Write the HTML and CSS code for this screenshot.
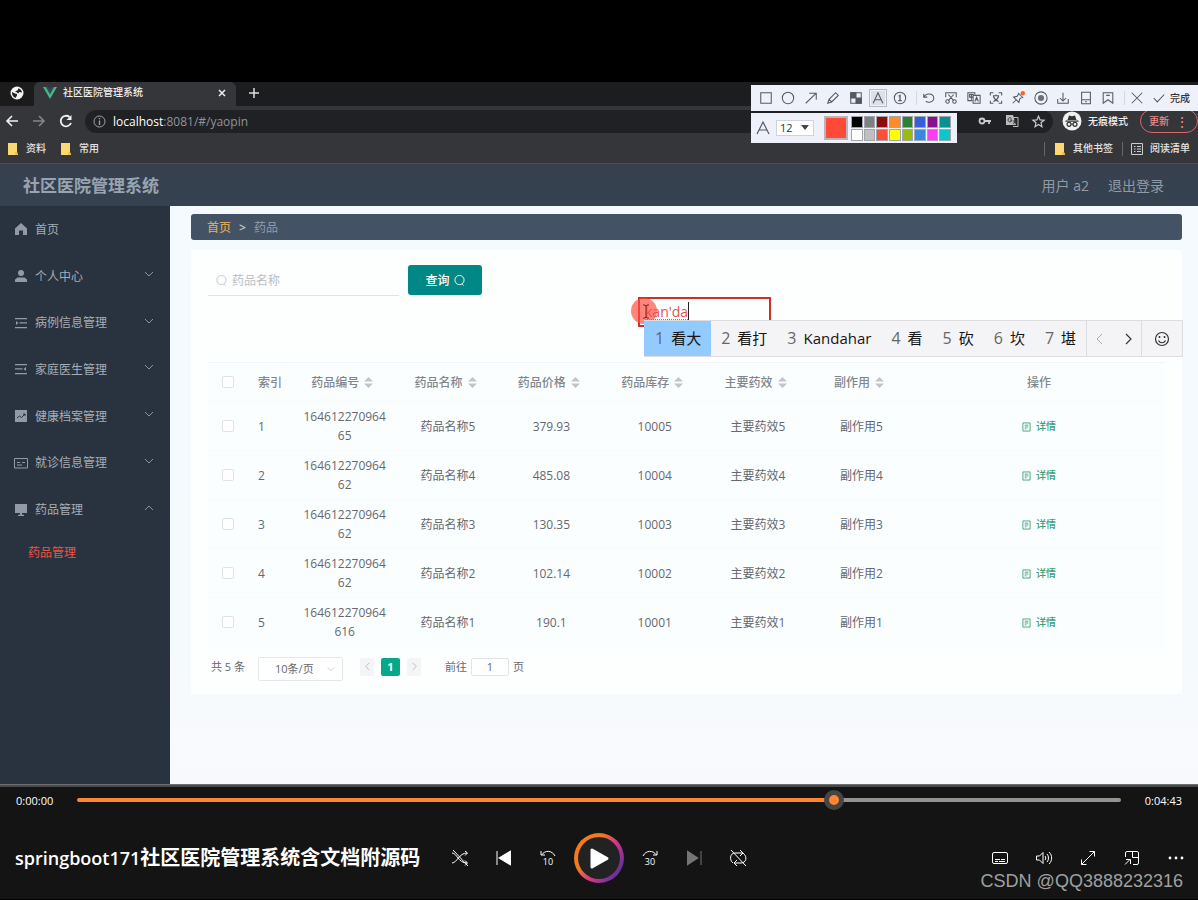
FILE: index.html
```html
<!DOCTYPE html>
<html lang="zh-CN">
<head>
<meta charset="utf-8">
<title>springboot171社区医院管理系统含文档附源码</title>
<link rel="stylesheet" href="styles.css">
</head>
<body>
<svg class="defs" aria-hidden="true">
  <symbol id="down" viewBox="0 0 10 10"><path d="M1 3l4 4 4-4" fill="none" stroke="currentColor"/></symbol>
  <symbol id="sort" viewBox="0 0 10 12"><path d="M5 0l5 5H0zM5 12l5-5H0z" fill="currentColor"/></symbol>
  <symbol id="find" viewBox="0 0 12 12"><circle cx="6" cy="5.500" r="5" fill="none" stroke="currentColor"/><path d="M8.500 9.500l2 2" fill="none" stroke="currentColor"/></symbol>
  <symbol id="doc" viewBox="0 0 10 10"><path d="M1 .5h8v9H1zM3 3h4M3 5h4M3 7h2" fill="none" stroke="currentColor"/></symbol>
  <symbol id="folder" viewBox="0 0 12 12"><path d="M1 0h9v9l1 3H1z" fill="#fcd871"/><path d="M8 9h2l1 3H8z" fill="#f2c04e"/></symbol>
</svg>

<main class="video">
  <div class="tabs">
    <span class="tab-pin"><svg width="14" height="14" viewBox="0 0 14 14"><circle cx="7" cy="7" r="6.500" fill="#f3f3f3"/><path d="M8 2.500c2 0 4 2 4 4L9.500 6 8 7.500 6.500 6 5 5.500 8 4zM2 6l3 1.500 2 .5v1.500L5.500 12C3 11 1.800 9 2 6z" fill="#222"/></svg></span>
    <div class="tab">
      <svg width="14" height="12" viewBox="0 0 14 12"><path d="M0 0h3l4 7 4-7h3L7 12z" fill="#41b883"/><path d="M3 0h2.500L7 3l1.500-3H11L7 7z" fill="#35495e"/></svg>
      <span class="tab-title">社区医院管理系统</span>
      <button class="plain" aria-label="关闭"><svg width="8" height="8" viewBox="0 0 8 8"><path d="M1 1l6 6M7 1L1 7" stroke="#eee" stroke-width="1.500"/></svg></button>
    </div>
    <button class="plain new-tab" aria-label="新标签页"><svg width="12" height="12" viewBox="0 0 12 12"><path d="M6 1v10M1 6h10" stroke="#ddd" stroke-width="1.500"/></svg></button>
  </div>
  <div class="toolbar">
    <div class="nav">
      <button class="plain" aria-label="后退"><svg width="14" height="14" viewBox="0 0 14 14" fill="none" stroke="#f1f1f1" stroke-width="1.600"><path d="M13 7H2M7 2L2 7l5 5"/></svg></button>
      <button class="plain" aria-label="前进"><svg width="14" height="14" viewBox="0 0 14 14" fill="none" stroke="#85868a" stroke-width="1.500"><path d="M1 7h11M7 2l5 5-5 5"/></svg></button>
      <button class="plain" aria-label="刷新"><svg width="14" height="14" viewBox="0 0 14 14" fill="none" stroke="#f1f1f1" stroke-width="1.800"><path d="M12 9a5.300 5.300 0 1 1-1.500-6"/><path d="M12.500 1v5h-5z" fill="#f1f1f1" stroke="none"/></svg></button>
    </div>
    <div class="omnibox">
      <svg width="13" height="13" viewBox="0 0 13 13" fill="none" stroke="#a5a6a9"><circle cx="6.500" cy="6.500" r="5.500"/><path d="M6.500 5.500V10M6.500 3v1.300" stroke-width="1.300"/></svg>
      <span class="url"><b>localhost</b>:8081/#/yaopin</span>
      <svg width="14" height="12" viewBox="0 0 14 12" fill="none" stroke="#ccc" stroke-width="1.800"><circle cx="4" cy="6" r="2.500"/><path d="M6.500 6H13M11 6v3"/></svg>
      <svg width="14" height="14" viewBox="0 0 14 14"><path d="M1 1h7l3 10H1z" fill="#bbb"/><path d="M6 3.500h7v9H8" fill="none" stroke="#bbb"/><path d="M6.500 4.500A2 2 0 1 0 7 6H5M8 7h4M10 6v1l-1.500 3M9 8l3 2" fill="none" stroke="#333" stroke-width=".9"/></svg>
      <svg width="13" height="13" viewBox="0 0 14 14"><path d="M7 1.300l1.700 4 4.300.3-3.300 2.800 1 4.200L7 10.300l-3.700 2.300 1-4.200L1 5.600l4.300-.3z" fill="none" stroke="#ccc" stroke-width="1.300"/></svg>
    </div>
    <span class="incognito"><svg width="20" height="20" viewBox="0 0 20 20"><circle cx="10" cy="10" r="9.500" fill="#f0f0f0"/><path d="M3.500 9.500h13v1.200h-13zM5.500 9L7 4.500l3 .8 3-.8L14.500 9z" fill="#333"/><g fill="none" stroke="#333" stroke-width="1.200"><circle cx="7" cy="13.300" r="2"/><circle cx="13" cy="13.300" r="2"/><path d="M9 13h2"/></g></svg>无痕模式</span>
    <button class="update">更新<span>⋮</span></button>
  </div>
  <div class="bookmarks">
    <a href="#"><svg width="12" height="12"><use href="#folder"/></svg>资料</a>
    <a href="#"><svg width="12" height="12"><use href="#folder"/></svg>常用</a>
    <a href="#" class="mark-right"><svg width="12" height="12"><use href="#folder"/></svg>其他书签</a>
    <a href="#" class="mark-list"><svg width="12" height="12" viewBox="0 0 12 12" fill="none" stroke="#ccc"><path d="M.5.5h11v11H.5zM3 3.500h1.500M6 3.500h4M3 6h1.500M6 6h4M3 8.500h1.500M6 8.500h4"/></svg>阅读清单</a>
  </div>

  <header class="app-header">
    <h1>社区医院管理系统</h1>
    <span>用户 a2</span><a href="#">退出登录</a>
  </header>

  <div class="app">
    <nav class="side">
      <ul>
        <li><svg class="ico" viewBox="0 0 12 12"><path d="M6 0l6 5.500V12H8V7.500H4V12H0V5.500z"/></svg><a href="#">首页</a></li>
        <li><svg class="ico" viewBox="0 0 12 12"><circle cx="6" cy="3" r="3"/><path d="M0 12V9.500L2.500 7.500h7L12 9.500V12z"/></svg><a href="#">个人中心</a><svg class="arrow"><use href="#down"/></svg></li>
        <li><svg class="ico" viewBox="0 0 12 12"><path d="M0 1h12v1.300H0zM4.500 5.300H12v1.300H4.500zM0 10h12v1.300H0zM1 4l2.500 2L1 8z"/></svg><a href="#">病例信息管理</a><svg class="arrow"><use href="#down"/></svg></li>
        <li><svg class="ico" viewBox="0 0 12 12"><path d="M0 1h12v1.300H0zM0 5.300h7.500v1.300H0zM0 10h12v1.300H0zM11 4L8.500 6 11 8z"/></svg><a href="#">家庭医生管理</a><svg class="arrow"><use href="#down"/></svg></li>
        <li><svg class="ico" viewBox="0 0 12 12"><path d="M0 0h12v12H0z"/><path d="M2 8l2.500-2 2 1.500L10 4M8 4h2v2" fill="none" stroke="#29333f"/></svg><a href="#">健康档案管理</a><svg class="arrow"><use href="#down"/></svg></li>
        <li><svg class="ico" viewBox="0 0 12 12"><path d="M-.5 1.500h13v9.500h-13zM2 5.500h3M2 8h5M7 5.500h3" fill="none" stroke="#929aa5"/></svg><a href="#">就诊信息管理</a><svg class="arrow"><use href="#down"/></svg></li>
        <li><svg class="ico" viewBox="0 0 12 12"><path d="M0 0h12v9H0zM5 9h2v2H5zM3 10.800h6V12H3z"/></svg><a href="#">药品管理</a><svg class="arrow up"><use href="#down"/></svg></li>
      </ul>
      <a href="#" class="current">药品管理</a>
    </nav>

    <section class="content">
      <div class="crumb"><a href="#">首页</a><b>&gt;</b><span>药品</span></div>
      <div class="card">
        <form class="search">
          <label class="field"><svg width="11" height="11"><use href="#find"/></svg><input type="text" placeholder="药品名称" aria-label="药品名称"></label>
          <button type="button" class="query">查询<svg width="11" height="11"><use href="#find"/></svg></button>
        </form>
        <table>
          <colgroup><col class="c-check"><col class="c-index"><col class="c-data" span="6"><col></colgroup>
          <thead><tr>
            <th><input type="checkbox" aria-label="全选"></th><th class="left">索引</th>
            <th>药品编号<svg class="sort"><use href="#sort"/></svg></th>
            <th>药品名称<svg class="sort"><use href="#sort"/></svg></th>
            <th>药品价格<svg class="sort"><use href="#sort"/></svg></th>
            <th>药品库存<svg class="sort"><use href="#sort"/></svg></th>
            <th>主要药效<svg class="sort"><use href="#sort"/></svg></th>
            <th>副作用<svg class="sort"><use href="#sort"/></svg></th>
            <th>操作</th>
          </tr></thead>
          <tbody>
            <tr><td><input type="checkbox" aria-label="选择 1"></td><td class="left">1</td><td>16461227096465</td><td>药品名称5</td><td>379.93</td><td>10005</td><td>主要药效5</td><td>副作用5</td><td><button class="detail"><svg width="9" height="10"><use href="#doc"/></svg>详情</button></td></tr>
            <tr><td><input type="checkbox" aria-label="选择 2"></td><td class="left">2</td><td>16461227096462</td><td>药品名称4</td><td>485.08</td><td>10004</td><td>主要药效4</td><td>副作用4</td><td><button class="detail"><svg width="9" height="10"><use href="#doc"/></svg>详情</button></td></tr>
            <tr><td><input type="checkbox" aria-label="选择 3"></td><td class="left">3</td><td>16461227096462</td><td>药品名称3</td><td>130.35</td><td>10003</td><td>主要药效3</td><td>副作用3</td><td><button class="detail"><svg width="9" height="10"><use href="#doc"/></svg>详情</button></td></tr>
            <tr><td><input type="checkbox" aria-label="选择 4"></td><td class="left">4</td><td>16461227096462</td><td>药品名称2</td><td>102.14</td><td>10002</td><td>主要药效2</td><td>副作用2</td><td><button class="detail"><svg width="9" height="10"><use href="#doc"/></svg>详情</button></td></tr>
            <tr><td><input type="checkbox" aria-label="选择 5"></td><td class="left">5</td><td>164612270964616</td><td>药品名称1</td><td>190.1</td><td>10001</td><td>主要药效1</td><td>副作用1</td><td><button class="detail"><svg width="9" height="10"><use href="#doc"/></svg>详情</button></td></tr>
          </tbody>
        </table>
        <div class="pager">
          <span>共 5 条</span>
          <span class="size"><select aria-label="每页条数"><option>10条/页</option></select><svg width="8" height="8"><use href="#down"/></svg></span>
          <button class="step prev" aria-label="上一页"><svg width="9" height="9"><use href="#down"/></svg></button>
          <button class="page">1</button>
          <button class="step next" aria-label="下一页"><svg width="9" height="9"><use href="#down"/></svg></button>
          <label class="jump">前往<input type="text" value="1">页</label>
        </div>
      </div>
    </section>
  </div>

  <div class="note"><span>kan'da</span></div>
  <svg class="pointer" width="28" height="28" viewBox="0 0 28 28"><circle cx="14" cy="14" r="13" fill="#ff4b40" fill-opacity=".68"/><path d="M13 8h2l1 1 1-1h2M16 9v11M13 21h2l1-1 1 1h2" fill="none" stroke="#6b2a28"/></svg>
  <div class="ime">
    <span class="cand on"><i>1</i>看大</span><span class="cand"><i>2</i>看打</span><span class="cand"><i>3</i>Kandahar</span><span class="cand"><i>4</i>看</span><span class="cand"><i>5</i>砍</span><span class="cand"><i>6</i>坎</span><span class="cand"><i>7</i>堪</span>
    <span class="ime-nav"><button class="plain" aria-label="上一组"><svg width="8" height="12" viewBox="0 0 8 12"><path d="M7 1L2 6l5 5" fill="none" stroke="#aaa"/></svg></button><button class="plain" aria-label="下一组"><svg width="8" height="12" viewBox="0 0 8 12"><path d="M1 1l5 5-5 5" fill="none" stroke="#333" stroke-width="1.200"/></svg></button></span>
    <button class="plain smile" aria-label="表情"><svg width="16" height="16" viewBox="0 0 16 16" fill="none" stroke="#333" stroke-width="1.200"><circle cx="8" cy="8" r="6.500"/><path d="M4.500 9.500c1.500 3 5.500 3 7 0"/><path d="M5.500 5v2M10.500 5v2" stroke-width="1.500"/></svg></button>
  </div>

  <div class="tools">
    <button class="plain" aria-label="矩形"><svg viewBox="0 0 16 16"><path d="M2 2h12v12H2z"/></svg></button>
    <button class="plain" aria-label="椭圆"><svg viewBox="0 0 16 16"><circle cx="8" cy="8" r="6.500"/></svg></button>
    <button class="plain" aria-label="箭头"><svg viewBox="0 0 16 16"><path d="M2 14L14 2.500M6 2.500h8v7.500"/></svg></button>
    <button class="plain" aria-label="画笔"><svg viewBox="0 0 16 16"><path d="M2 14l1.500-4.500L11 2l3 3-7.500 7.500zM3.500 9.500l3 3"/></svg></button>
    <button class="plain" aria-label="马赛克"><svg viewBox="0 0 16 16"><path d="M2 2h12v12H2z"/><path d="M2 2h6v6H2zM8 8h6v6H8z" fill="#555962"/></svg></button>
    <button class="plain chosen" aria-label="文字"><svg viewBox="0 0 16 16"><path d="M2.500 14L8 2l5.500 12M4.500 10h7"/></svg></button>
    <button class="plain" aria-label="序号"><svg viewBox="0 0 16 16"><circle cx="8" cy="8" r="6.500"/><path d="M6.500 6L8 5v6M6 11h4" stroke-width="1.500"/></svg></button>
    <button class="plain split" aria-label="撤销"><svg viewBox="0 0 16 16"><path d="M2 3v4h4M2.500 7C4 2 13 2 13.500 8c0 5-7 6-9 3.500"/></svg></button>
    <button class="plain" aria-label="剪切"><svg viewBox="0 0 16 16"><path d="M2 7V2h12v5M5 4l6 7M11 4l-6 7"/><circle cx="4" cy="12" r="2"/><circle cx="12" cy="12" r="2"/></svg></button>
    <button class="plain" aria-label="翻译"><svg viewBox="0 0 16 16"><path d="M9 4V2H1v9h5M3 4h4v3H3zM5 3v7M7 5h8v9H7zM9 12l2-5 2 5M10 10h2"/></svg></button>
    <button class="plain" aria-label="识别文字"><svg viewBox="0 0 16 16"><path d="M1.500 5V2H5M11 2h3.500v3M14.500 11v3H11M5 14H1.500v-3M4.500 5.500h7M8 4v1.500M5 12c3-1 5-3 6-6M5 6c1 3 3 5 6 6"/></svg></button>
    <button class="plain" aria-label="固定"><svg viewBox="0 0 16 16"><path d="M2 14l4-4M8 2l6 6M9 3L7 6 3 7l6 6 1-4 3-2"/><circle cx="13.500" cy="2.500" r="2.500" fill="#ff6422" stroke="none"/></svg></button>
    <button class="plain" aria-label="录制"><svg viewBox="0 0 16 16"><circle cx="8" cy="8" r="7"/><circle cx="8" cy="8" r="3.500" fill="#6b6e78" stroke="none"/></svg></button>
    <button class="plain" aria-label="保存"><svg viewBox="0 0 16 16"><path d="M8 2v9M4.500 8L8 11.500 11.500 8M2 9v5h12V9"/></svg></button>
    <button class="plain" aria-label="手机"><svg viewBox="0 0 16 16"><path d="M3 1.500h10v13H3zM3 10h10M7 12.300h2"/></svg></button>
    <button class="plain" aria-label="收藏"><svg viewBox="0 0 16 16"><path d="M2.500 2h11v12L8 10l-5.500 4zM6 5h4"/></svg></button>
    <button class="plain split" aria-label="取消"><svg viewBox="0 0 16 16"><path d="M2 2l12 12M14 2L2 14"/></svg></button>
    <button class="plain done"><svg viewBox="0 0 16 16"><path d="M2 8l4 4.500L14 4"/></svg>完成</button>
  </div>
  <div class="palette">
    <svg width="14" height="14" viewBox="0 0 14 14" fill="none" stroke="#555962" stroke-width="1.200"><path d="M1 13L7 1l6 12M3 9h8"/></svg>
    <span class="font-size"><select aria-label="字号"><option>12</option></select><svg width="8" height="5" viewBox="0 0 8 5"><path d="M0 0h8L4 5z" fill="#444"/></svg></span>
    <span class="big"></span>
    <div class="swatches">
      <span class="s-black"></span><span class="s-gray"></span><span class="s-maroon"></span><span class="s-orange"></span><span class="s-green"></span><span class="s-blue"></span><span class="s-purple"></span><span class="s-teal"></span>
      <span class="s-white"></span><span class="s-silver"></span><span class="s-red"></span><span class="s-yellow"></span><span class="s-lime"></span><span class="s-sky"></span><span class="s-pink"></span><span class="s-cyan"></span>
    </div>
  </div>
</main>

<footer class="player">
  <div class="timeline"><span>0:00:00</span><input type="range" min="0" max="1000" value="730" aria-label="播放进度"><span>0:04:43</span></div>
  <div class="controls">
    <h2><span>springboot171</span>社区医院管理系统含文档附源码</h2>
    <div class="buttons">
      <button class="plain" aria-label="随机播放"><svg viewBox="0 0 18 18"><path d="M1 4c5 0 6 10 15 10M1 14C6 14 8 4 16 4M14 2l2.500 2L14 6.500M14 11.500l2.500 2.500-2.500 2.500M2 1l15 16"/></svg></button>
      <button class="plain" aria-label="上一个"><svg viewBox="0 0 18 18"><path d="M2 2v14"/><path d="M15 3v12L5 9z" fill="#fff" stroke-width="2"/></svg></button>
      <button class="plain" aria-label="后退10秒"><svg viewBox="0 0 18 18"><path d="M2 2v4h4M2.500 6C6 1 13 1 16 7"/><text x="9" y="16">10</text></svg></button>
      <button class="plain play" aria-label="播放"><svg viewBox="0 0 48 48"><path d="M17 16v17l15-8.500z" fill="#fff" stroke-width="3" stroke-linejoin="round"/></svg></button>
      <button class="plain" aria-label="前进30秒"><svg viewBox="0 0 18 18"><path d="M16 2v4h-4M15.500 6C12 1 5 1 2 7"/><text x="9" y="16">30</text></svg></button>
      <button class="plain off" aria-label="下一个"><svg viewBox="0 0 18 18"><path d="M16 2v14"/><path d="M3 3v12l9-6z" fill="currentColor" stroke-width="2"/></svg></button>
      <button class="plain" aria-label="循环"><svg viewBox="0 0 18 18"><path d="M4 14C0 11 1 4 6 4h8M11 1l3 3-3 3M14 4c5 4 3 10-2 10H6M8 11l-3 3 3 3M2 1l15 16"/></svg></button>
    </div>
    <div class="extras">
      <button class="plain" aria-label="字幕"><svg viewBox="0 0 18 18"><rect x="1.500" y="3.500" width="15" height="11" rx="1.500"/><path d="M4 10.500h5M10 10.500h4M4 12.500h3M8 12.500h6"/></svg></button>
      <button class="plain" aria-label="音量"><svg viewBox="0 0 18 18"><path d="M1.500 7h3L8 3.500v11L4.500 11h-3zM10 7c1 1 1 3 0 4M12 5c2 2 2 6 0 8M14 3c3.500 3 3.500 9 0 12"/></svg></button>
      <button class="plain" aria-label="全屏"><svg viewBox="0 0 18 18"><path d="M2.500 15.500l13-13M10.500 2.500h5v5M2.500 10.500v5h5"/></svg></button>
      <button class="plain" aria-label="迷你播放"><svg viewBox="0 0 18 18"><path d="M2.500 8V4q0-1.500 1.500-1.500h10q1.500 0 1.500 1.500v10q0 1.500-1.500 1.500h-4M9.500 2.500v6h6M2 15.500l5-5M3 10.500h4.500V15"/></svg></button>
      <button class="plain" aria-label="更多"><svg viewBox="0 0 18 18"><g fill="#fff" stroke="none"><circle cx="3" cy="9" r="1.400"/><circle cx="9" cy="9" r="1.400"/><circle cx="15" cy="9" r="1.400"/></g></svg></button>
    </div>
  </div>
  <div class="watermark">CSDN @QQ3888232316</div>
</footer>
</body>
</html>
```
FILE: styles.css
```css
* { box-sizing: border-box; }
body {
  margin: 0;
  min-height: 100vh;
  display: flex;
  flex-direction: column;
  background: #000;
  font: 12px/19px "Open Sans", "Noto Sans CJK SC", sans-serif;
  color: #66686d;
}
a { color: inherit; text-decoration: none; }
svg { flex: none; overflow: visible; }
button, input, select { font: inherit; color: inherit; margin: 0; }
button { cursor: pointer; }
.plain { border: 0; padding: 0; background: none; display: flex; align-items: center; justify-content: center; }
.defs { position: absolute; width: 0; height: 0; }

.video { position: relative; flex: 1; display: flex; flex-direction: column; padding-top: 82px; }

/* browser window */
.tabs { display: flex; height: 24px; background: #1b1d1f; font-size: 10px; color: #eee; }
.tab-pin { width: 34px; display: flex; align-items: center; justify-content: center; padding-bottom: 3px; background: #1b1b1b; border-radius: 0 0 6px 0; }
.tab { display: flex; align-items: center; width: 202px; padding: 0 10px 3px 9px; background: #35363a; border-radius: 6px 6px 0 0; }
.tab-title { flex: 1; margin-left: 6px; font-weight: 500; }
.new-tab { width: 36px; padding-bottom: 3px; }
.toolbar { display: flex; align-items: center; height: 30px; background: #35363a; color: #eee; font-size: 10px; }
.nav { display: flex; gap: 13px; padding-left: 5px; width: 85px; }
.omnibox { flex: 1; display: flex; align-items: center; gap: 13px; height: 23px; padding: 0 8px; border-radius: 12px; background: #202124; }
.url { flex: 1; margin-left: -6px; font-size: 12px; color: #929397; }
.url b { font-weight: 400; color: #fff; }
.incognito { display: flex; align-items: center; gap: 6px; margin: 0 12px 0 9px; font-weight: 500; }
.update { display: flex; align-items: center; justify-content: space-between; width: 58px; height: 24px; padding: 0 8px; border: 1px solid #d9686c; border-radius: 12px; background: none; color: #f08a84; font-weight: 500; }
.update span { font-size: 14px; }
.bookmarks { display: flex; align-items: center; height: 28px; padding: 0 8px 2px 7px; gap: 14px; background: #35363a; border-bottom: 1px solid #4b4d54; color: #e4e4e4; font-size: 10px; font-weight: 500; }
.bookmarks a { display: flex; align-items: center; gap: 7px; height: 14px; }
.bookmarks .mark-right { margin-left: auto; padding-left: 9px; border-left: 1px solid #66676b; }
.bookmarks .mark-list { margin-left: -5px; padding-left: 8px; border-left: 1px solid #66676b; }

/* hospital app */
.app-header { display: flex; align-items: center; height: 42px; padding: 0 34px 0 23px; gap: 19px; background: linear-gradient(#37404e, #35424f); color: #919ba7; font-size: 14px; }
.app-header h1 { flex: 1; margin: 0; font-size: 17px; font-weight: 700; color: #98a4b1; }
.app { flex: 1; display: flex; border-bottom: 1px solid #6f7073; }
.side { width: 170px; background: #29333f; color: #a5adb7; }
.side ul { list-style: none; margin: 0; padding: 0; height: 327px; display: grid; grid-template-rows: repeat(7, 1fr); }
.side li { display: flex; align-items: center; gap: 8px; padding: 0 16px 0 15px; }
.side li a { flex: 1; }
.ico { width: 12px; height: 12px; fill: #929aa5; }
.arrow { width: 10px; height: 10px; color: #8c949e; margin-bottom: 4px; }
.up { transform: rotate(180deg); }
.current { display: block; padding: 10px 28px; color: #ee5445; }
.content { flex: 1; min-width: 0; padding: 8px 16px 0 21px; background: linear-gradient(#f4faff, #f6fafd 480px, #f9f9fc); }
.crumb { display: flex; align-items: center; gap: 8px; height: 26px; padding: 0 16px; border-radius: 3px; background: #435265; color: #929eab; }
.crumb a { color: #dda45a; font-weight: 500; }
.crumb b { color: #c2c9d1; font-weight: 600; }
.card { margin-top: 10px; padding: 15px 17px 10px; background: #fdfefe; }
.search { display: flex; gap: 9px; margin-bottom: 66px; }
.field { display: flex; align-items: center; gap: 5px; width: 191px; height: 31px; padding-left: 8px; border-bottom: 1px solid #dfe2e7; color: #c0c4cc; }
.field input { min-width: 0; flex: 1; border: 0; padding: 0; background: none; outline: 0; }
.field input::placeholder { color: #b9bdc4; opacity: 1; }
.query { display: flex; align-items: center; justify-content: center; gap: 4px; width: 74px; height: 30px; border: 0; border-radius: 3px; background: #018786; color: #fff; font-weight: 500; }
table { width: 100%; table-layout: fixed; border-collapse: collapse; border-top: 1px solid #f1f4f6; background: #fbfeff; }
.c-check { width: 40px; }
.c-index { width: 45px; }
.c-data { width: 10.8%; }
th, td { padding: 0 10px; height: 49px; text-align: center; font-weight: 400; word-break: break-all; }
th { height: 39px; padding: 0; color: #82868c; font-weight: 500; white-space: nowrap; }
td { border-top: 1px solid #f8fafb; }
th.left, td.left { text-align: left; padding-left: 10px; padding-right: 0; }
input[type="checkbox"] { appearance: none; display: block; width: 12px; height: 12px; margin: auto; border: 1px solid #dfe3e8; border-radius: 2px; background: #fff; }
td:first-child { padding: 0; }
.sort { width: 9px; height: 11px; margin: 0 5px; vertical-align: -1px; color: #c0c4cc; }
.detail { display: inline-flex; align-items: center; gap: 5px; padding: 0; border: 0; background: none; color: #3f9f78; font-size: 10px; font-weight: 500; vertical-align: middle; }
.pager { display: flex; align-items: center; height: 34px; margin-top: 3px; padding-left: 3px; font-size: 11px; }
.size { position: relative; margin: 4px 17px 0 13px; }
.size select { display: block; width: 85px; height: 24px; appearance: none; padding: 0 16px; border: 1px solid #e3e6eb; border-radius: 2px; background: #fff; }
.size svg { position: absolute; right: 8px; top: 8px; color: #c0c4cc; }
.step { width: 14px; height: 18px; padding: 0; border: 0; background: #f4f5f6; color: #b5b8be; display: flex; align-items: center; justify-content: center; }
.prev svg { transform: rotate(90deg); }
.next svg { transform: rotate(-90deg); }
.page { width: 19px; height: 18px; margin: 0 7px; padding: 0; border: 0; border-radius: 2px; background: #05a98a; color: #fff; font-weight: 700; line-height: 18px; }
.jump { display: flex; align-items: center; gap: 4px; margin-left: 24px; }
.jump input { width: 38px; height: 18px; padding: 0; text-align: center; border: 1px solid #e0e3e8; border-radius: 2px; background: #fff; }

/* floating windows over the desktop */
.note { position: absolute; left: 638px; top: 297px; width: 133px; height: 30px; padding: 3px 5px; border: 2px solid #cf2f25; color: #e0564c; font-size: 14px; line-height: 20px; }
.note span { border-right: 1px solid #222; text-decoration: underline dotted 1px; text-underline-offset: 2px; }
.pointer { position: absolute; left: 630px; top: 297px; }
.ime { position: absolute; left: 644px; top: 320px; height: 37px; display: flex; background: #f4f4f6; border: 1px solid #dddde0; border-left: 0; font-size: 15px; color: #151515; }
.cand { display: flex; align-items: center; gap: 7px; padding: 0 10px; }
.cand i { font-style: normal; font-size: 16px; color: #666; }
.on { padding-left: 11px; background: #93caff; }
.ime-nav { display: flex; gap: 22px; padding: 0 8px; border: solid #dddde0; border-width: 0 1px; }
.smile { width: 40px; }
.tools { position: absolute; right: 0; top: 85px; width: 447px; height: 26px; display: flex; align-items: center; justify-content: space-between; padding: 0 8px; background: #eff1fa; color: #333; font-size: 10px; }
.tools svg { width: 14px; height: 14px; fill: none; stroke: #555962; stroke-width: 1.2; }
.chosen { outline: 1px solid #b5bac4; outline-offset: 1px; background: #dde0e8; }
.split { border-left: 1px solid #d5d7df; padding-left: 5px; }
.done { gap: 4px; font-weight: 500; }
.palette { position: absolute; right: 241px; top: 113px; width: 206px; height: 30px; display: flex; align-items: center; padding: 0 6px 0 5px; background: #eff1fa; color: #333; }
.font-size { position: relative; margin: 0 10px 0 6px; }
.font-size select { display: block; width: 38px; height: 16px; padding: 0 3px; appearance: none; border: 1px solid #cfd2d9; background: #fff; font-size: 11px; line-height: 14px; }
.font-size svg { position: absolute; right: 5px; top: 5px; }
.big { width: 24px; height: 24px; margin-right: 3px; border: 2px solid #b9b4b8; background: #ff4a38; }
.swatches { flex: 1; display: grid; grid-template-columns: repeat(8, 1fr); gap: 1px; }
.swatches span { height: 12px; border: 1px solid #a3a5ad; }
.s-black { background: #000; } .s-gray { background: #808080; } .s-maroon { background: #8c0d0d; } .s-orange { background: #fb8c28; }
.s-green { background: #2a8232; } .s-blue { background: #355fdc; } .s-purple { background: #8a118e; } .s-teal { background: #06908f; }
.s-white { background: #fff; } .s-silver { background: #c0c0c0; } .s-red { background: #fc5038; } .s-yellow { background: #ff0; }
.s-lime { background: #98bd0b; } .s-sky { background: #3988df; } .s-pink { background: #fb3ef4; } .s-cyan { background: #0bc6ca; }

/* media player */
.player { position: relative; height: 115px; background: #141414; color: #fff; border-top: 2px solid #48494a; border-bottom: 1px solid #000; }
.timeline { display: flex; align-items: center; gap: 24px; height: 26px; padding: 0 16px; font-size: 11px; }
.timeline input { flex: 1; min-width: 0; height: 20px; appearance: none; background: none; }
.timeline input::-webkit-slider-runnable-track { height: 4px; border-radius: 2px; background: linear-gradient(90deg, #ff8433 72.6%, #939393 72.6%); }
.timeline input::-webkit-slider-thumb { appearance: none; width: 20px; height: 20px; margin-top: -8px; border: 5px solid #454545; border-radius: 50%; background: #ff8433; }
.controls { display: grid; grid-template-columns: 1fr auto 1fr; align-items: center; height: 62px; margin-top: 14px; padding: 0 15px; }
.controls h2 { margin: 0; font-size: 20px; font-weight: 600; white-space: nowrap; }
.controls h2 span { font-size: 18px; }
.controls svg { width: 18px; height: 18px; fill: none; stroke: currentColor; }
.controls text { fill: #fff; stroke: none; font-size: 9px; text-anchor: middle; }
.buttons, .extras { display: flex; align-items: center; gap: 26px; }
.extras { justify-content: flex-end; margin-right: -2px; }
.off { color: #757575; }
.buttons .play { width: 50px; height: 50px; margin: 0 -9px; border: 4px solid transparent; border-radius: 50%; background: linear-gradient(#222, #222) padding-box, linear-gradient(125deg, #f37a1f 35%, #d2358c 58%, #63329a 85%) border-box; }
.buttons .play svg { width: 48px; height: 48px; }
.watermark { position: absolute; right: 15px; bottom: 8px; font-size: 18px; line-height: 20px; color: #a0a0a0; font-family: "Liberation Sans", sans-serif; }
```
